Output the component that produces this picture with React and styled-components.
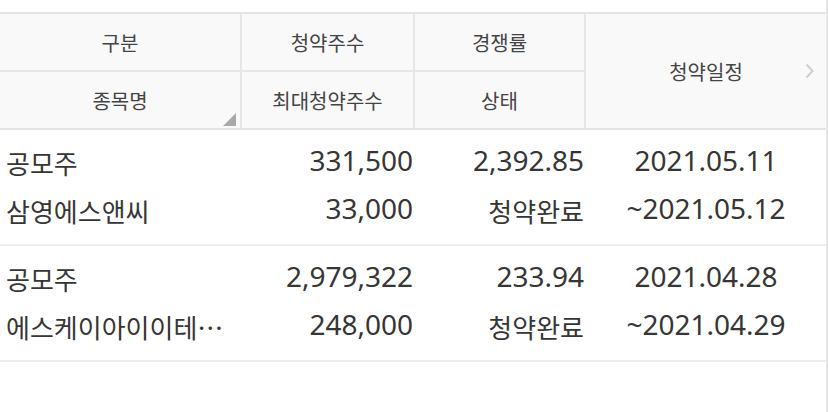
import React from 'react'
import styled, { createGlobalStyle } from 'styled-components'

const GlobalStyle = createGlobalStyle`
  html, body {
    margin: 0;
    padding: 0;
    background: #ffffff;
  }
  * {
    box-sizing: border-box;
  }
`

const COLS = '242px 173px 171px 240px'

const Wrapper = styled.div`
  width: 828px;
  height: 412px;
  padding-top: 12px;
  border-right: 2px solid #e6e6e6;
  font-family: "Noto Sans CJK KR", "Noto Sans", sans-serif;
  overflow: hidden;
`

const Header = styled.div`
  display: grid;
  grid-template-columns: ${COLS};
  grid-template-rows: 58px 56px;
  background: #f9f9f9;
  border-top: 2px solid #e4e4e4;
  border-bottom: 2px solid #e4e4e4;
`

const HeadCell = styled.div`
  position: relative;
  display: flex;
  align-items: center;
  justify-content: center;
  font-size: 20px;
  color: #444444;
  border-right: ${({ last }) => (last ? 'none' : '2px solid #e6e6e6')};
  border-bottom: ${({ top }) => (top ? '2px solid #e6e6e6' : 'none')};
  grid-row: ${({ span }) => (span ? '1 / span 2' : 'auto')};
  grid-column: ${({ col }) => col};
`

const Corner = styled.span`
  position: absolute;
  right: 4px;
  bottom: 2px;
  width: 0;
  height: 0;
  border-left: 13px solid transparent;
  border-bottom: 13px solid #a9a9a9;
`

const Chevron = styled.svg`
  position: absolute;
  right: 12px;
  top: 50%;
  margin-top: -8px;
`

const Row = styled.div`
  display: grid;
  grid-template-columns: ${COLS};
  padding: 9px 0;
  border-bottom: 2px solid #efefef;
  color: #333333;
`

const Cell = styled.div`
  display: flex;
  flex-direction: column;
  min-width: 0;
  align-items: ${({ align }) =>
    align === 'right' ? 'flex-end' : align === 'center' ? 'center' : 'flex-start'};
  padding: ${({ align }) =>
    align === 'right' ? '0 2px 0 0' : align === 'left' ? '0 14px 0 6px' : '0'};
`

const Line = styled.div`
  height: 48px;
  line-height: ${({ num }) => (num ? '42px' : '48px')};
  padding-bottom: ${({ num }) => (num ? '6px' : '0')};
  max-width: 100%;
  white-space: nowrap;
  overflow: hidden;
  text-overflow: ellipsis;
  font-family: ${({ num }) =>
    num ? '"Noto Sans", "Noto Sans CJK KR", sans-serif' : '"Noto Sans CJK KR", sans-serif'};
  font-size: ${({ num }) => (num ? '28px' : '26px')};
  color: #363636;
`

const rows = [
  {
    type: '공모주',
    name: '삼영에스앤씨',
    shares: '331,500',
    maxShares: '33,000',
    rate: '2,392.85',
    status: '청약완료',
    start: '2021.05.11',
    end: '~2021.05.12',
  },
  {
    type: '공모주',
    name: '에스케이아이이테…',
    shares: '2,979,322',
    maxShares: '248,000',
    rate: '233.94',
    status: '청약완료',
    start: '2021.04.28',
    end: '~2021.04.29',
  },
]

export default function App() {
  return (
    <>
      <GlobalStyle />
      <Wrapper>
        <Header>
          <HeadCell top col="1">구분</HeadCell>
          <HeadCell top col="2">청약주수</HeadCell>
          <HeadCell top col="3">경쟁률</HeadCell>
          <HeadCell span last col="4">
            청약일정
            <Chevron width="9" height="16" viewBox="0 0 9 16">
              <polyline points="1.5,1.5 7.5,8 1.5,14.5" fill="none" stroke="#cfcfcf" strokeWidth="2" />
            </Chevron>
          </HeadCell>
          <HeadCell col="1">
            종목명
            <Corner />
          </HeadCell>
          <HeadCell col="2">최대청약주수</HeadCell>
          <HeadCell col="3">상태</HeadCell>
        </Header>
        {rows.map((r, i) => (
          <Row key={i}>
            <Cell align="left">
              <Line>{r.type}</Line>
              <Line>{r.name}</Line>
            </Cell>
            <Cell align="right">
              <Line num>{r.shares}</Line>
              <Line num>{r.maxShares}</Line>
            </Cell>
            <Cell align="right">
              <Line num>{r.rate}</Line>
              <Line>{r.status}</Line>
            </Cell>
            <Cell align="center">
              <Line num>{r.start}</Line>
              <Line num>{r.end}</Line>
            </Cell>
          </Row>
        ))}
      </Wrapper>
    </>
  )
}
